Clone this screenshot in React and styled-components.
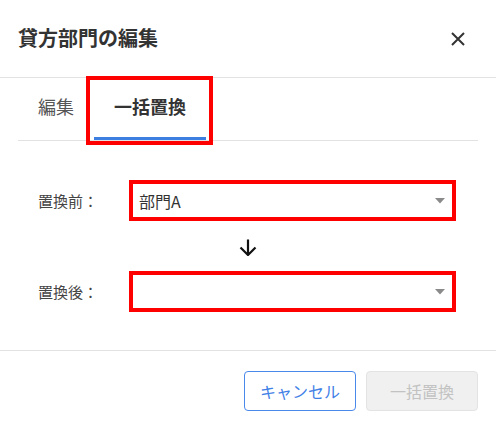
import React from "react";
import styled, { createGlobalStyle } from "styled-components";

const GlobalStyle = createGlobalStyle`
  html, body { margin: 0; padding: 0; background: #fff; }
  body {
    font-family: "Noto Sans CJK JP", "Noto Sans", sans-serif;
    color: #333;
  }
  * { box-sizing: border-box; }
`;

const Dialog = styled.div`
  width: 496px;
  height: 431px;
  display: flex;
  flex-direction: column;
  background: #fff;
`;

const Header = styled.header`
  height: 78px;
  flex-shrink: 0;
  display: flex;
  align-items: center;
  justify-content: space-between;
  padding: 0 18px 0 18px;
  border-bottom: 1px solid #e2e2e2;
`;

const Title = styled.h2`
  margin: 0 0 2px 0;
  font-size: 20px;
  line-height: 28px;
  font-weight: 700;
  color: #333;
`;

const CloseButton = styled.button`
  width: 40px;
  height: 40px;
  padding: 0;
  border: none;
  background: transparent;
  display: flex;
  align-items: center;
  justify-content: center;
  cursor: pointer;
`;

const Body = styled.div`
  padding: 0 18px;
  display: flex;
  flex-direction: column;
`;

const TabList = styled.div`
  display: flex;
  border-bottom: 1px solid #e2e2e2;
`;

const Tab = styled.button`
  position: relative;
  margin: 0;
  padding: 16px 20px 19px;
  border: none;
  border-bottom: 3px solid ${(p) => (p.$active ? "#3d7fe0" : "transparent")};
  background: transparent;
  font-family: inherit;
  font-size: 18px;
  line-height: 24px;
  font-weight: ${(p) => (p.$active ? 700 : 400)};
  color: ${(p) => (p.$active ? "#333" : "#555")};
  cursor: pointer;
`;

const Annotation = styled.span`
  position: absolute;
  pointer-events: none;
  border: 4px solid #ff0000;
  top: ${(p) => p.$t}px;
  right: ${(p) => p.$r}px;
  bottom: ${(p) => p.$b}px;
  left: ${(p) => p.$l}px;
`;

const Form = styled.div`
  padding: 41px 0 40px;
  display: flex;
  flex-direction: column;
`;

const Row = styled.div`
  display: flex;
  align-items: center;
  height: 37px;
  padding: 0 24px 0 20px;
`;

const Label = styled.label`
  width: 93px;
  flex-shrink: 0;
  font-size: 15px;
  line-height: 20px;
  color: #444;
`;

const SelectBox = styled.div`
  position: relative;
  flex: 1;
  height: 37px;
  border: 1px solid #ccc;
  border-radius: 2px;
  display: flex;
  align-items: center;
  justify-content: space-between;
  padding: 0 8px 0 7px;
  font-size: 16px;
  line-height: 22px;
  color: #333;
`;

const ArrowRow = styled.div`
  height: 54px;
  display: flex;
  align-items: center;
  justify-content: center;
  padding-top: 3px;
`;

const Footer = styled.footer`
  border-top: 1px solid #e2e2e2;
  padding: 20px 18px;
  display: flex;
  justify-content: flex-end;
  gap: 10px;
`;

const Button = styled.button`
  height: 40px;
  min-width: 112px;
  padding: 0 15px;
  border-radius: 4px;
  font-family: inherit;
  font-size: 16px;
  line-height: 22px;
  border: 1px solid ${(p) => (p.$disabled ? "#e3e3e3" : "#4a88ea")};
  background: ${(p) => (p.$disabled ? "#f0f0f0" : "#fff")};
  color: ${(p) => (p.$disabled ? "#c2c2c2" : "#3f80e6")};
`;

const Caret = () => (
  <svg width="10" height="6" viewBox="0 0 10 6">
    <polygon points="0,0 10,0 5,5.5" fill="#8a8a8a" />
  </svg>
);

const Select = ({ value }) => (
  <SelectBox>
    <span>{value}</span>
    <Caret />
    <Annotation $t={-3} $r={-3} $b={-3} $l={-3} />
  </SelectBox>
);

export default function App() {
  return (
    <>
      <GlobalStyle />
      <Dialog>
        <Header>
          <Title>貸方部門の編集</Title>
          <CloseButton aria-label="閉じる">
            <svg width="14" height="14" viewBox="0 0 14 14">
              <path d="M1 1 L13 13 M13 1 L1 13" stroke="#333" strokeWidth="2" />
            </svg>
          </CloseButton>
        </Header>
        <Body>
          <TabList>
            <Tab>編集</Tab>
            <Tab $active>
              一括置換
              <Annotation $t={-2} $r={-7} $b={-8} $l={-8} />
            </Tab>
          </TabList>
          <Form>
            <Row>
              <Label>置換前：</Label>
              <Select value="部門A" />
            </Row>
            <ArrowRow>
              <svg width="18" height="17" viewBox="0 0 18 17">
                <path d="M9 0.5 V15.5 M1.5 8.5 L9 16 L16.5 8.5" stroke="#111" strokeWidth="2.2" fill="none" />
              </svg>
            </ArrowRow>
            <Row>
              <Label>置換後：</Label>
              <Select value="" />
            </Row>
          </Form>
        </Body>
        <Footer>
          <Button>キャンセル</Button>
          <Button $disabled disabled>一括置換</Button>
        </Footer>
      </Dialog>
    </>
  );
}
